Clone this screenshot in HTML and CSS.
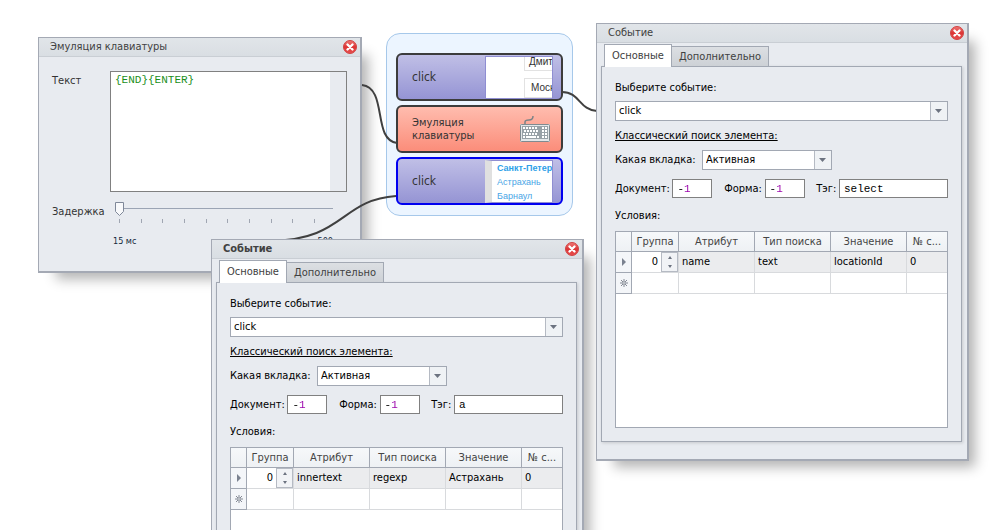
FILE: index.html
```html
<!DOCTYPE html>
<html lang="ru">
<head>
<meta charset="utf-8">
<title>Событие</title>
<link rel="stylesheet" href="styles.css">
</head>
<body>
<svg class="defs" aria-hidden="true">
  <defs>
    <linearGradient id="red" x1="0" y1="0" x2="0" y2="1"><stop offset="0" stop-color="#f07a78"/><stop offset="0.5" stop-color="#dc3434"/><stop offset="1" stop-color="#e85050"/></linearGradient>
    <symbol id="close" viewBox="0 0 14 14"><circle cx="7" cy="7" r="6.5" fill="url(#red)" stroke="#d04444"/><path d="M4.5 4.5l5 5M9.5 4.5l-5 5" stroke="#fff" stroke-width="2.4" stroke-linecap="round"/></symbol>
    <symbol id="star" viewBox="0 0 8 8"><path d="M4 0v8M0 4h8M1 1l6 6M7 1L1 7" stroke="#777d88" stroke-width="0.9"/><circle cx="4" cy="4" r="1.2" fill="#f4f6f9" stroke="#777d88" stroke-width="0.6"/></symbol>
    <symbol id="current" viewBox="0 0 4 8"><path d="M0 0l4 4-4 4z" fill="#7b8290"/></symbol>
  </defs>
</svg>
<main class="canvas">
  <section class="window keys-window">
    <header class="titlebar"><h2 class="title">Эмуляция клавиатуры</h2><button class="close" aria-label="Закрыть"><svg><use href="#close"/></svg></button></header>
    <div class="keys-form">
      <label class="keys-label" for="keys">Текст</label>
      <div class="memo"><textarea class="memo-text" id="keys" spellcheck="false">{END}{ENTER}</textarea></div>
      <label class="delay-label" for="delay">Задержка</label>
      <div class="slider">
        <input class="range" id="delay" type="range" min="15" max="500" value="15">
        <div class="ticks"><i></i><i></i><i></i><i></i><i></i><i></i><i></i><i></i><i></i><i></i></div>
        <div class="limits"><span>15 мс</span><span>500</span></div>
      </div>
    </div>
  </section>

  <section class="group">
    <article class="block">
      <span class="block-name">click</span>
      <div class="thumb cities"><span class="city">Дмит</span><span class="city">Моск</span></div>
    </article>
    <article class="block block-keys">
      <span class="block-text">Эмуляция клавиатуры</span>
      <svg class="keyboard" viewBox="0 0 32 28">
        <path d="M6 9V7C6 5 8 5 10 5S14 4 14 1" fill="none" stroke="#7b8387" stroke-width="1.500"/>
        <rect x="1" y="9" width="30" height="18" rx="1" fill="#e2e6e8"/>
        <rect x="1.500" y="9.500" width="29" height="17" rx="1" fill="none" stroke="#808a90"/>
        <rect x="3" y="11" width="26" height="13" fill="#98a1a7"/>
        <path d="M4 13h15M23 13h6M5 16h15M23 16h6M4 19h15M23 19h6M4 22h2M18 22h2M23 22h6" stroke="#fff" stroke-width="2" stroke-dasharray="2 1"/>
        <path d="M7 22h10" stroke="#fff" stroke-width="2"/>
      </svg>
    </article>
    <article class="block block-active">
      <span class="block-name">click</span>
      <div class="thumb links"><b>Санкт-Петер</b><span>Астрахань</span><span>Барнаул</span></div>
    </article>
  </section>

  <svg class="wires" aria-hidden="true">
    <path d="M362 85C388 88 372 140 397 143"/>
    <path d="M562 92C580 92 579 110 597 111"/>
    <path d="M396 196C340 200 345 240 270 241"/>
  </svg>

  <section class="window event-window event-front">
    <header class="titlebar"><h2 class="title title-active">Событие</h2><button class="close" aria-label="Закрыть"><svg><use href="#close"/></svg></button></header>
    <nav class="tabs"><button class="tab tab-on">Основные</button><button class="tab">Дополнительно</button></nav>
    <div class="pane">
      <label class="line" for="event-a">Выберите событие:</label>
      <select class="combo" id="event-a"><option>click</option></select>
      <p class="line section"><u>Классический поиск элемента:</u></p>
      <div class="row"><label for="tab-a">Какая вкладка:</label><select class="combo combo-tab" id="tab-a"><option>Активная</option></select></div>
      <div class="row fields">
        <label for="doc-a">Документ:</label><span class="box"><input class="code number" id="doc-a" value="-1"></span>
        <label for="form-a">Форма:</label><span class="box"><input class="code number" id="form-a" value="-1"></span>
        <label for="tag-a">Тэг:</label><span class="box box-tag"><input class="code" id="tag-a" value="a"></span>
      </div>
      <p class="line conditions">Условия:</p>
      <div class="grid">
        <table>
          <colgroup><col class="c-mark"><col class="c-group"><col class="c-text"><col class="c-text"><col class="c-text"><col></colgroup>
          <thead><tr><th></th><th>Группа</th><th>Атрибут</th><th>Тип поиска</th><th>Значение</th><th>№ с...</th></tr></thead>
          <tbody>
            <tr class="current"><th><svg class="mark-current"><use href="#current"/></svg></th><td class="edit"><div class="spin"><input class="spin-value" aria-label="Группа" value="0"><button class="spin-button" aria-label="Изменить"><i class="up"></i><i class="down"></i></button></div></td><td>innertext</td><td>regexp</td><td>Астрахань</td><td>0</td></tr>
            <tr><th><svg class="mark-new"><use href="#star"/></svg></th><td></td><td></td><td></td><td></td><td></td></tr>
          </tbody>
        </table>
      </div>
    </div>
  </section>

  <section class="window event-window event-right">
    <header class="titlebar"><h2 class="title">Событие</h2><button class="close" aria-label="Закрыть"><svg><use href="#close"/></svg></button></header>
    <nav class="tabs"><button class="tab tab-on">Основные</button><button class="tab">Дополнительно</button></nav>
    <div class="pane">
      <label class="line" for="event-b">Выберите событие:</label>
      <select class="combo" id="event-b"><option>click</option></select>
      <p class="line section"><u>Классический поиск элемента:</u></p>
      <div class="row"><label for="tab-b">Какая вкладка:</label><select class="combo combo-tab" id="tab-b"><option>Активная</option></select></div>
      <div class="row fields">
        <label for="doc-b">Документ:</label><span class="box"><input class="code number" id="doc-b" value="-1"></span>
        <label for="form-b">Форма:</label><span class="box"><input class="code number" id="form-b" value="-1"></span>
        <label for="tag-b">Тэг:</label><span class="box box-tag"><input class="code" id="tag-b" value="select"></span>
      </div>
      <p class="line conditions">Условия:</p>
      <div class="grid">
        <table>
          <colgroup><col class="c-mark"><col class="c-group"><col class="c-text"><col class="c-text"><col class="c-text"><col></colgroup>
          <thead><tr><th></th><th>Группа</th><th>Атрибут</th><th>Тип поиска</th><th>Значение</th><th>№ с...</th></tr></thead>
          <tbody>
            <tr class="current"><th><svg class="mark-current"><use href="#current"/></svg></th><td class="edit"><div class="spin"><input class="spin-value" aria-label="Группа" value="0"><button class="spin-button" aria-label="Изменить"><i class="up"></i><i class="down"></i></button></div></td><td>name</td><td>text</td><td>locationId</td><td>0</td></tr>
            <tr><th><svg class="mark-new"><use href="#star"/></svg></th><td></td><td></td><td></td><td></td><td></td></tr>
          </tbody>
        </table>
      </div>
    </div>
  </section>
</main>
</body>
</html>
```

FILE: styles.css
```css
* { box-sizing: border-box; }
body { margin: 0; background: #fff; color: #000; font: 11px/14px "DejaVu Sans Condensed", "Noto Sans", sans-serif; }
h2, p { margin: 0; font-size: inherit; font-weight: normal; }
button, input, select, textarea { font: inherit; color: inherit; margin: 0; padding: 0; border: 0; border-radius: 0; outline: 0; }
.defs { position: absolute; width: 0; height: 0; }
.canvas { position: relative; height: 100vh; overflow: hidden; }
.wires { position: absolute; inset: 0; width: 100%; height: 100%; fill: none; stroke: #404040; stroke-width: 2; pointer-events: none; }

/* Windows */
.window { position: absolute; background: #e8ebf0; border: 1px solid #a4a9b4; border-right-width: 2px; border-bottom-width: 2px; box-shadow: 12px 12px 12px -6px rgba(0, 0, 0, .3); }
.keys-window { left: 38px; top: 37px; width: 324px; height: 236px; }
.event-window { width: 373px; }
.event-front { left: 211px; top: 239px; }
.event-right { left: 596px; top: 23px; }
.titlebar { display: flex; align-items: center; justify-content: space-between; height: 19px; padding: 0 3px 0 11px; background: linear-gradient(#e1e5e9, #d9dee3); border-bottom: 1px solid #c9ced4; }
.title { color: #414141; }
.title-active { font-weight: bold; }
.close { background: none; width: 14px; height: 14px; }
.close svg { display: block; width: 14px; height: 14px; }

/* Keyboard window */
.keys-form { display: grid; grid-template-columns: 58px 1fr; padding: 14px 13px 0 13px; color: #333; row-gap: 10px; }
.keys-label, .delay-label { padding-top: 3px; }
.memo { height: 121px; padding-right: 16px; border: 1px solid #808080; }
.memo-text { display: block; width: 100%; height: 100%; padding: 1px 4px; resize: none; background: #fff; color: #1a8f1a; font: 11px/14px "Courier New", "Liberation Mono", monospace; }
.slider { padding: 0 14px 0 3px; }
.range { appearance: none; display: block; width: calc(100% - 2px); height: 15px; margin-left: 2px; background: linear-gradient(#9ba4b4, #9ba4b4) 0 6px / 100% 1px no-repeat; }
.range::-webkit-slider-thumb { appearance: none; width: 9px; height: 15px; background: url("data:image/svg+xml,%3Csvg xmlns='http://www.w3.org/2000/svg' width='9' height='15'%3E%3Cpath d='M.5.5h8v9l-4 4-4-4z' fill='%23f8f9fb' stroke='%237f8899'/%3E%3C/svg%3E"); }
.ticks { display: flex; justify-content: space-between; padding: 2px 18px 0 6px; }
.ticks i { width: 1px; height: 4px; background: #a0a6b2; }
.limits { display: flex; justify-content: space-between; padding-top: 11px; font-size: 9px; color: #14283c; }

/* Action blocks */
.group { position: absolute; left: 386px; top: 33px; width: 187px; display: grid; gap: 4px; padding: 19px 9px 10px; background: #ecf5ff; border: 1px solid #a6c8ea; border-radius: 14px; }
.block { display: flex; align-items: center; justify-content: space-between; height: 48px; padding: 0 8px 0 14px; background: linear-gradient(#c0bfe6, #9594d4); border: 2px solid #3c3c3c; border-radius: 6px; color: #333; }
.block-keys { background: linear-gradient(#ffbcae, #fb8d7a); padding-right: 10px; }
.block-active { border-color: #0000f0; }
.block-name { font-size: 12px; }
.block-text { width: 70px; line-height: 13px; }
.keyboard { width: 32px; height: 28px; }
.thumb { display: flex; flex-direction: column; width: 68px; height: 43px; overflow: hidden; background: #fff; border: 1px solid #8f8ed2; font: 9px/14px "Liberation Sans", Arial, sans-serif; }
.cities { align-items: flex-end; justify-content: space-between; font-size: 10px; }
.city { width: 28px; height: 20px; padding: 2px 0 0 6px; border: 1px solid #e2e2e2; border-right: 0; overflow: hidden; }
.city:first-child { height: 14px; padding: 0 0 0 4px; line-height: 10px; border-top: 0; }
.links { padding-left: 5px; border-left: 7px solid #e0e0e0; color: #4aa5e6; white-space: nowrap; }
.links b { color: #2f9fe8; }

/* Event window */
.tabs { display: flex; align-items: flex-end; height: 23px; padding: 1px 0 0 7px; }
.tab { height: 20px; padding: 0 7px; background: linear-gradient(#dcdfe3, #cdd1d6); border: 1px solid #a2a8b3; border-left: 0; border-bottom: 0; color: #414141; }
.tab-on { z-index: 1; height: 23px; margin-bottom: -1px; background: #fff; border-left: 1px solid #a2a8b3; }
.pane { margin: 0 5px 17px 4px; padding: 14px 13px 13px; border: 1px solid #a2a8b3; box-shadow: 1px 1px 3px rgba(0, 0, 0, .15); }
.line { display: block; }
.combo { appearance: none; display: block; width: 100%; height: 20px; margin-top: 6px; padding-left: 3px; border: 1px solid #a2a8b3; background: url("data:image/svg+xml,%3Csvg xmlns='http://www.w3.org/2000/svg' width='17' height='18'%3E%3Cpath fill='%23eff2f5' d='M0 0h17v18H0z'/%3E%3Cpath fill='%23b5bac3' d='M0 0h1v18H0z'/%3E%3Cpath fill='%236c7380' d='M5 7h7L8.500 11z'/%3E%3C/svg%3E") right / 17px 100% no-repeat #fff; }
.section { margin-top: 8px; }
.row { display: flex; align-items: center; justify-content: space-between; margin-top: 7px; }
.row .combo-tab { width: 130px; margin: 0 116px 0 0; }
.fields { margin-top: 9px; }
.box { width: 40px; height: 19px; background: #fff; border: 1px solid #808080; }
.box + label { margin-left: 9px; }
.box-tag { width: 109px; }
.code { display: block; width: 100%; height: 100%; padding: 0 4px; background: none; font: 11px/14px "Courier New", "Liberation Mono", monospace; }
.number { color: transparent; background: linear-gradient(90deg, #000 11px, #90a 11px); background-clip: text; }
.conditions { margin-top: 11px; }
.grid { height: 197px; margin-top: 8px; background: #fff; border: 1px solid #a2a8b3; }
table { width: 100%; table-layout: fixed; border-collapse: separate; border-spacing: 0; }
.c-mark { width: 16px; }
.c-group { width: 47px; }
.c-text { width: 76px; }
th, td { height: 21px; padding: 0 3px; text-align: left; font-weight: normal; white-space: nowrap; overflow: hidden; border: solid #d8dadd; border-width: 0 1px 1px 0; }
th { background: #f4f6f9; border-color: #a2a8b3; }
thead th { height: 20px; padding: 0; text-align: center; color: #444; background: linear-gradient(#f6f8fa, #eef1f4); }
tr > :last-child { border-right: 0; }
tbody th { padding: 0; text-align: center; }
.current td { background: #ebecee; }
.current .edit { padding: 0; background: #fff; }
.mark-current, .mark-new { display: block; height: 8px; margin: 0 auto; }
.mark-current { width: 4px; }
.mark-new { width: 8px; }
.spin { display: flex; height: 20px; }
.spin-value { flex: 1; min-width: 0; padding-right: 3px; text-align: right; background: none; }
.spin-button { display: flex; flex-direction: column; align-items: center; justify-content: center; gap: 6px; width: 17px; background: #f1f3f6; border: 1px solid #b5bac3; }
.up, .down { border: 2px solid transparent; }
.up { border-top: 0; border-bottom: 3px solid #6c7380; }
.down { border-bottom: 0; border-top: 3px solid #6c7380; }
```
